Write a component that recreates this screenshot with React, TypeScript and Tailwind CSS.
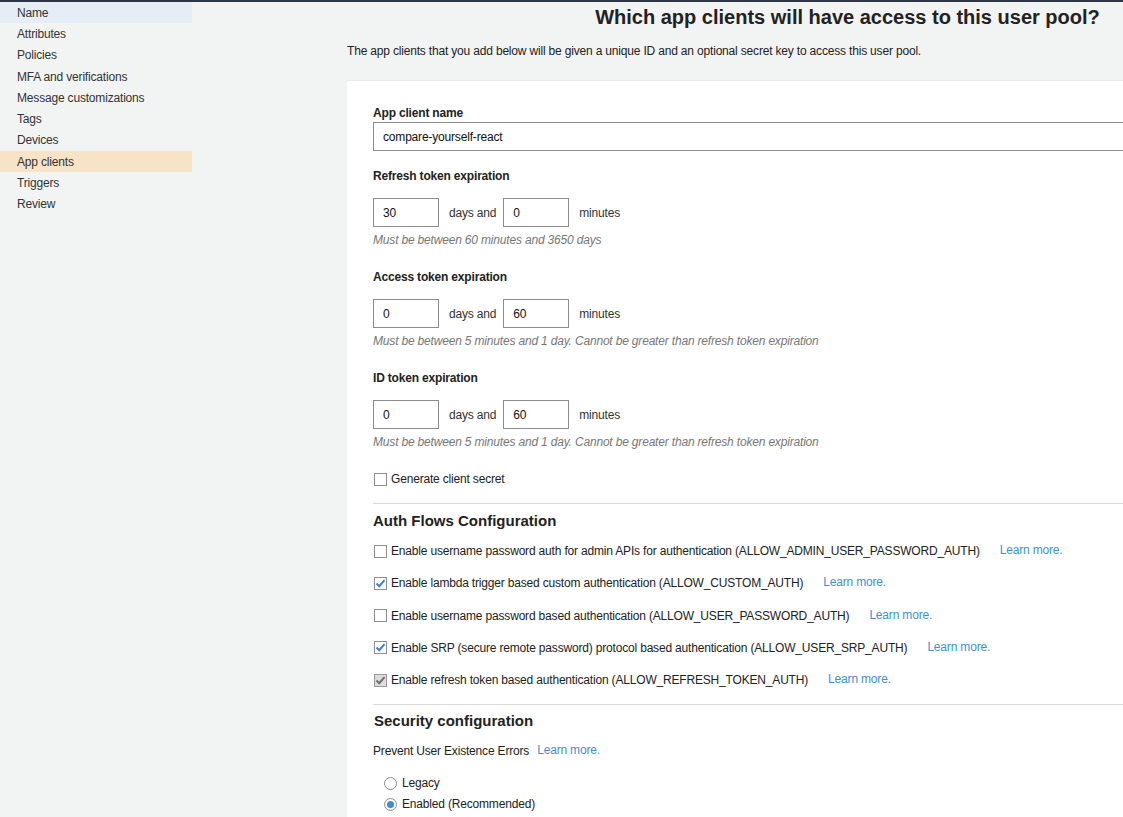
import type { ReactNode } from 'react'

const navItems = [
  'Name',
  'Attributes',
  'Policies',
  'MFA and verifications',
  'Message customizations',
  'Tags',
  'Devices',
  'App clients',
  'Triggers',
  'Review',
]

type Flow = { label: string; state: 'off' | 'on' | 'locked' }

const flows: Flow[] = [
  { label: 'Enable username password auth for admin APIs for authentication (ALLOW_ADMIN_USER_PASSWORD_AUTH)', state: 'off' },
  { label: 'Enable lambda trigger based custom authentication (ALLOW_CUSTOM_AUTH)', state: 'on' },
  { label: 'Enable username password based authentication (ALLOW_USER_PASSWORD_AUTH)', state: 'off' },
  { label: 'Enable SRP (secure remote password) protocol based authentication (ALLOW_USER_SRP_AUTH)', state: 'on' },
  { label: 'Enable refresh token based authentication (ALLOW_REFRESH_TOKEN_AUTH)', state: 'locked' },
]

function Box({ state }: { state: 'off' | 'on' | 'locked' }) {
  const locked = state === 'locked'
  return (
    <span
      className={
        'w-[13px] h-[13px] shrink-0 border flex items-center justify-center ' +
        (locked ? 'bg-[#dcdcdc] border-[#9a9a9a]' : 'bg-white border-[#8f8f8f]')
      }
    >
      {state !== 'off' && (
        <svg width="11" height="11" viewBox="0 0 11 11">
          <path
            d="M1.5 5.5 L4.2 8.2 L9.5 2.2"
            fill="none"
            stroke={locked ? '#6f6f6f' : '#3b7fd1'}
            strokeWidth="2"
          />
        </svg>
      )}
    </span>
  )
}

function Radio({ on }: { on?: boolean }) {
  return (
    <span className="w-[13px] h-[13px] rounded-full border border-[#8f8f8f] bg-white flex items-center justify-center shrink-0">
      {on && <span className="w-[7px] h-[7px] rounded-full bg-[#3a8fdc]" />}
    </span>
  )
}

function Learn({ className = '' }: { className?: string }) {
  return <span className={'text-[#3f8fd6] -translate-y-[1px] ' + className}>Learn more.</span>
}

function Field({ value }: { value: string }) {
  return (
    <div className="w-[66px] h-[29px] border border-[#8c8c8c] bg-white flex items-center pl-[9px] text-[#111]">
      {value}
    </div>
  )
}

function Expiration({
  title,
  days,
  mins,
  hint,
  first,
}: {
  title: string
  days: string
  mins: string
  hint: ReactNode
  first?: boolean
}) {
  return (
    <div className={first ? 'mt-[18px]' : 'mt-[23px]'}>
      <div className="font-bold text-[#222] leading-[14px]">{title}</div>
      <div className="flex items-center mt-[15px]">
        <Field value={days} />
        <span className="ml-[10px] mr-[7px] text-[#333]">days and</span>
        <Field value={mins} />
        <span className="ml-[10px] text-[#333]">minutes</span>
      </div>
      <div className="italic text-[#777] mt-[6px] leading-[14px]">{hint}</div>
    </div>
  )
}

export default function App() {
  return (
    <div
      className="w-[1123px] h-[817px] overflow-hidden bg-[#f2f3f3] border-t-2 border-[#2d3643] flex text-[12px] leading-[14px] text-[#222] tracking-[-0.18px]"
      style={{ fontFamily: '"Liberation Sans", Arial, sans-serif' }}
    >
      <nav className="w-[192px] shrink-0 flex flex-col">
        {navItems.map(n => (
          <div
            key={n}
            className={
              'h-[21.3px] flex items-center pl-[17px] text-[#333] ' +
              (n === 'Name' ? 'bg-[#e6eef5]' : n === 'App clients' ? 'bg-[#f7e3c5] text-[#111]' : '')
            }
          >
            {n}
          </div>
        ))}
      </nav>

      <main className="ml-[155px] w-[1001px] shrink-0 flex flex-col">
        <h1 className="text-center font-bold text-[20px] leading-[24px] text-[#222] mt-[3px] tracking-normal">
          Which app clients will have access to this user pool?
        </h1>
        <p className="mt-[15px] text-[#222]">
          The app clients that you add below will be given a unique ID and an optional secret key to access this user pool.
        </p>

        <section className="mt-[22px] bg-white border-t border-[#e8eaea] pl-[26px] pr-[26px] pt-[25px] flex-1">
          <div className="font-bold leading-[14px]">App client name</div>
          <div className="mt-[2px] h-[29px] border border-[#8c8c8c] flex items-center pl-[9px] text-[#111]">
            compare-yourself-react
          </div>

          <Expiration first title="Refresh token expiration" days="30" mins="0" hint="Must be between 60 minutes and 3650 days" />
          <Expiration
            title="Access token expiration"
            days="0"
            mins="60"
            hint="Must be between 5 minutes and 1 day. Cannot be greater than refresh token expiration"
          />
          <Expiration
            title="ID token expiration"
            days="0"
            mins="60"
            hint="Must be between 5 minutes and 1 day. Cannot be greater than refresh token expiration"
          />

          <label className="flex items-center gap-[4px] mt-[23px] pl-[1px]">
            <Box state="off" />
            <span>Generate client secret</span>
          </label>

          <div className="mt-[17px] border-t border-[#d5d8d8]" />
          <h2 className="mt-[8px] font-bold text-[15px] leading-[18px] tracking-normal">Auth Flows Configuration</h2>

          <div className="mt-[14px] flex flex-col gap-[18.25px]">
            {flows.map(f => (
              <div key={f.label} className="flex items-center pl-[1px]">
                <Box state={f.state} />
                <span className="ml-[4px]">{f.label}</span>
                <Learn className="ml-[20px]" />
              </div>
            ))}
          </div>

          <div className="mt-[17px] border-t border-[#d5d8d8]" />
          <h2 className="mt-[7px] font-bold text-[15px] leading-[18px] pl-[1px] tracking-normal">Security configuration</h2>
          <div className="mt-[14px] flex">
            <span>Prevent User Existence Errors</span>
            <Learn className="ml-[8px]" />
          </div>
          <div className="mt-[18px] pl-[11px] flex flex-col gap-[7px]">
            <label className="flex items-center gap-[5px]">
              <Radio />
              <span>Legacy</span>
            </label>
            <label className="flex items-center gap-[5px]">
              <Radio on />
              <span>Enabled (Recommended)</span>
            </label>
          </div>
        </section>
      </main>
    </div>
  )
}
